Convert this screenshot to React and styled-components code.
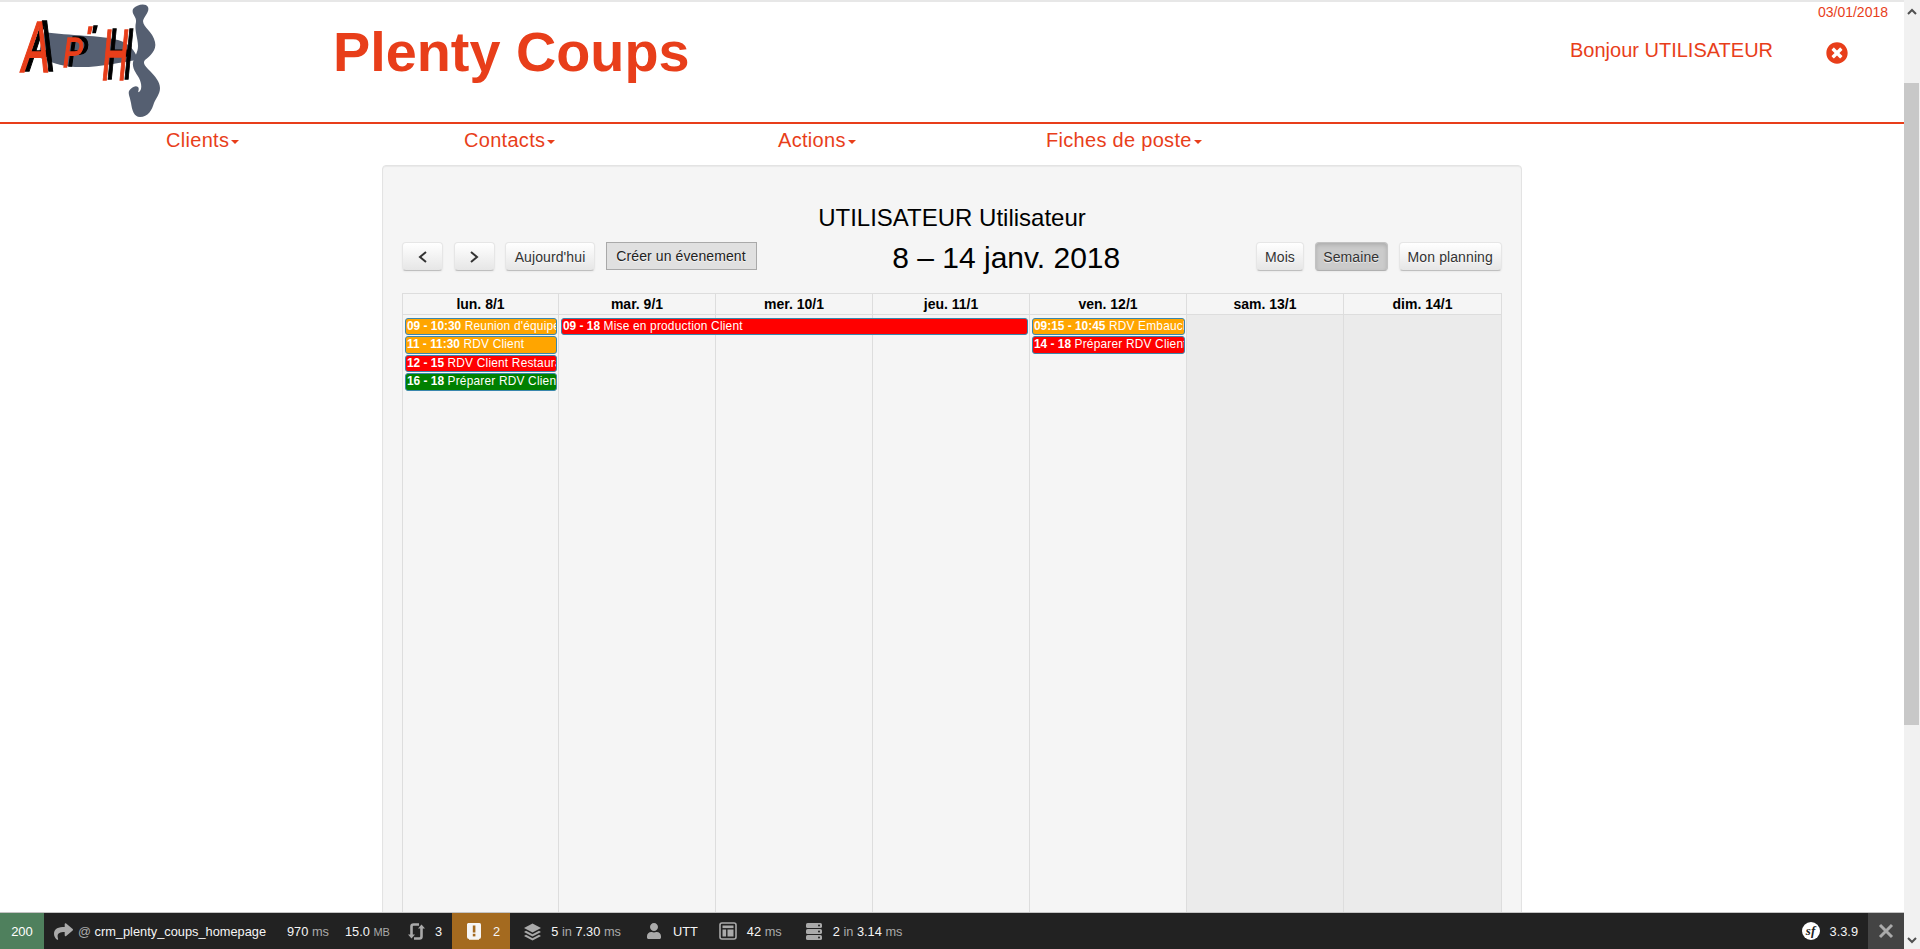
import React from "react";
import styled, { createGlobalStyle, css } from "styled-components";
import { FaTimesCircle, FaShare, FaUser } from "react-icons/fa";

const Global = createGlobalStyle`
  html, body {
    margin: 0;
    height: 100%;
    overflow: hidden;
    background: #fff;
    font-family: "Liberation Sans", Arial, sans-serif;
  }
`;

const RED = "#e83e1a";

const Shell = styled.div`
  display: flex;
  height: 949px;
  overflow: hidden;
`;

const Main = styled.div`
  flex: 1;
  min-width: 0;
  border-top: 2px solid #e7e7e7;
`;

const Scrollbar = styled.div`
  width: 16px;
  background: #f1f1f1;
  display: flex;
  flex-direction: column;
  justify-content: space-between;
`;

const ScrollArrow = styled.div`
  height: ${(p) => p.$h}px;
  display: flex;
  align-items: center;
  justify-content: center;
`;

const ScrollThumb = styled.div`
  width: 15px;
  height: 642px;
  margin-top: 61px;
  background: #c8c8c8;
`;

const Header = styled.header`
  height: 120px;
  display: flex;
  border-bottom: 2px solid ${RED};
`;

const LogoBox = styled.div`
  width: 333px;
  flex: none;
`;

const Title = styled.h1`
  flex: 1;
  margin: 18px 0 0;
  font-size: 55.8px;
  line-height: 64px;
  font-weight: 700;
  color: ${RED};
`;

const UserBox = styled.div`
  width: 318px;
  box-sizing: content-box;
  flex: none;
  padding: 2px 16px 0 0;
  color: ${RED};
  .date {
    font-size: 14px;
    line-height: 16px;
    text-align: right;
  }
  .hello {
    display: flex;
    align-items: flex-start;
    justify-content: space-between;
    margin-top: 18px;
    padding-right: 40px;
    font-size: 20px;
    line-height: 24px;
  }
  svg {
    margin-top: 4px;
    display: block;
  }
`;

const Nav = styled.nav`
  height: 32px;
  padding-left: 166px;
  display: flex;
  align-items: center;
`;

const NavItem = styled.a`
  width: ${(p) => p.$w}px;
  flex: none;
  font-size: 20px;
  line-height: 32px;
  letter-spacing: 0.3px;
  color: ${RED};
  &::after {
    content: "";
    display: inline-block;
    margin-left: 2px;
    vertical-align: middle;
    border-top: 4px solid ${RED};
    border-left: 4px solid transparent;
    border-right: 4px solid transparent;
  }
`;

const Panel = styled.section`
  box-sizing: border-box;
  width: 1140px;
  height: 790px;
  margin: 9px 0 0 382px;
  padding: 19px;
  background: #f5f5f5;
  border: 1px solid #e3e3e3;
  border-radius: 4px;
  box-shadow: inset 0 1px 1px rgba(0, 0, 0, 0.05);
`;

const CalTitle = styled.h3`
  margin: 20px 0 11px;
  font-size: 24px;
  line-height: 26px;
  font-weight: 400;
  text-align: center;
  color: #000;
`;

const Toolbar = styled.div`
  height: 51px;
  display: flex;
  justify-content: space-between;
  align-items: flex-start;
`;

const BtnGroup = styled.div`
  display: flex;
  gap: 10.5px;
`;

const DateTitle = styled.h2`
  margin: 0;
  font-size: 30px;
  line-height: 32px;
  font-weight: 400;
  color: #000;
`;

const Btn = styled.button`
  box-sizing: border-box;
  height: 29px;
  width: ${(p) => p.$w}px;
  padding: 0;
  font: 14px "Liberation Sans", Arial, sans-serif;
  letter-spacing: 0.1px;
  color: #333;
  border: 1px solid;
  border-color: #e6e6e6 #e6e6e6 #bfbfbf;
  border-radius: 4px;
  background: linear-gradient(#fff, #e6e6e6);
  text-shadow: 0 1px 1px rgba(255, 255, 255, 0.75);
  box-shadow: inset 0 1px 0 rgba(255, 255, 255, 0.2), 0 1px 2px rgba(0, 0, 0, 0.05);
  display: flex;
  align-items: center;
  justify-content: center;
  ${(p) =>
    p.$active &&
    css`
      background: #cbcbcb;
      border-color: #c2c2c2 #c2c2c2 #b0b0b0;
      box-shadow: inset 0 2px 4px rgba(0, 0, 0, 0.15), 0 1px 2px rgba(0, 0, 0, 0.05);
    `}
  ${(p) =>
    p.$flat &&
    css`
      background: #e0e0e0;
      border: 1px solid #a9a9a9;
      border-radius: 0;
      box-shadow: none;
      color: #222;
      height: 28px;
    `}
`;

const Grid = styled.div`
  height: 640px;
  display: grid;
  grid-template-columns: 156px repeat(5, 157px) 158px;
  grid-template-rows: 21px 20px 18.5px 18.5px 18.5px 1fr;
  border: solid #ddd;
  border-width: 1px 0 0 1px;
  box-sizing: border-box;
`;

const HeadCell = styled.div`
  grid-row: 1;
  grid-column: ${(p) => p.$col};
  border: solid #ddd;
  border-width: 0 1px 1px 0;
  font-size: 14px;
  line-height: 20px;
  font-weight: 700;
  text-align: center;
  color: #000;
`;

const DayCell = styled.div`
  grid-row: 2 / 7;
  grid-column: ${(p) => p.$col};
  border-right: 1px solid #ddd;
  background: ${(p) => (p.$off ? "#ebebeb" : "transparent")};
`;

const Event = styled.div`
  grid-row: ${(p) => p.$row};
  grid-column: ${(p) => p.$col} / span ${(p) => p.$span || 1};
  align-self: end;
  z-index: 1;
  min-width: 0;
  height: 17.5px;
  box-sizing: border-box;
  margin: 0 2px;
  padding: 0 1px;
  overflow: hidden;
  white-space: nowrap;
  font-size: 11.9px;
  line-height: 15.5px;
  letter-spacing: 0.2px;
  color: #fff;
  background: ${(p) => p.$bg};
  border: 1px solid #3a87ad;
  border-radius: 3px;
  b {
    font-weight: 700;
    letter-spacing: 0;
  }
`;

const Debug = styled.footer`
  position: fixed;
  left: 0;
  bottom: 0;
  width: 1904px;
  height: 37px;
  box-sizing: border-box;
  z-index: 5;
  display: flex;
  align-items: center;
  background: #222;
  border-top: 1px solid #c4c4c4;
  font-size: 12.8px;
  color: #f5f5f5;
`;

const Status = styled.div`
  width: 44px;
  height: 100%;
  flex: none;
  display: flex;
  align-items: center;
  justify-content: center;
  background: #4f805d;
  color: #fff;
  font-size: 13px;
`;

const Tool = styled.div`
  height: 100%;
  flex: none;
  display: flex;
  align-items: center;
  gap: ${(p) => p.$gap ?? 9}px;
  margin-left: ${(p) => p.$ml || 0}px;
  padding: ${(p) => p.$pad || 0};
  background: ${(p) => p.$bg || "transparent"};
  white-space: pre;
  svg {
    display: block;
    flex: none;
  }
`;

const Version = styled(Tool)`
  margin-left: auto;
`;

const Label = styled.span`
  color: #aaa;
  font-size: ${(p) => p.$size || 12.8}px;
`;

const SfBadge = styled.span`
  width: 18px;
  height: 18px;
  border-radius: 50%;
  background: #fff;
  color: #222;
  display: flex;
  align-items: center;
  justify-content: center;
  font: italic 700 13px "Liberation Serif", serif;
`;

const CloseBox = styled.div`
  width: 36px;
  height: 100%;
  margin-left: 10px;
  flex: none;
  background: #444;
  display: flex;
  align-items: center;
  justify-content: center;
`;

const LETTERS = [
  { ch: "A", x: 22, y: 70, size: 72, w: 28 },
  { ch: "P", x: 63, y: 65, size: 42, w: 20 },
  { ch: "'", x: 85, y: 45, size: 30, w: 6 },
  { ch: "H", x: 102, y: 78, size: 72, w: 26 },
];

const LogoLetters = styled.g`
  filter: drop-shadow(5px -1px 0 #000);
  font-family: "Liberation Sans", sans-serif;
  font-style: italic;
  font-weight: 400;
  stroke: #e83e1a;
  stroke-width: 1.5px;
`;

const Logo = () => (
  <svg width="170" height="118" viewBox="0 0 170 118">
    <path
      fill="#555f71"
      d="M44 30C70 34 100 33 118 38C128 41 135 47 138 58C120 60 100 66 75 65C60 64 50 60 38 55Z"
    />
    <path
      fill="#555f71"
      d="M133 7C137 2 146 1 148 5C150 10 144 14 143 19C143 25 153 30 155 40C157 48 150 54 145 58C142 61 146 65 150 69C155 74 160 80 160 86C160 92 156 96 154 101C152 108 148 115 140 115C134 115 132 108 131 101C130 95 128 92 129 89C131 86 135 83 138 85C140 87 137 91 139 90C142 88 142 82 139 76C136 71 132 66 133 60C135 54 138 50 138 44C138 36 134 28 136 20C137 15 131 12 133 7Z"
    />
    <LogoLetters fill="#e83e1a">
      {LETTERS.map((l) => (
        <text key={l.ch} x={l.x} y={l.y} fontSize={l.size} textLength={l.w} lengthAdjust="spacingAndGlyphs">
          {l.ch}
        </text>
      ))}
    </LogoLetters>
  </svg>
);

const Chevron = ({ dir }) => (
  <svg width="10" height="12" viewBox="0 0 10 12">
    <polyline
      points={dir === "left" ? "8,1 2,6 8,11" : "2,1 8,6 2,11"}
      fill="none"
      stroke="#333"
      strokeWidth="2"
    />
  </svg>
);

const SyncIcon = () => (
  <svg width="19" height="19" viewBox="0 0 19 19" fill="none" stroke="#aaa" strokeWidth="2.6">
    <path d="M14.5 5v9.5a2 2 0 0 1-2 2H7" />
    <path d="M4.5 14V4.5a2 2 0 0 1 2-2H12" />
    <path d="M11 6.5L14.5 2.5l3.5 4z" fill="#aaa" stroke="none" />
    <path d="M1 12.5l3.5 4 3.5-4z" fill="#aaa" stroke="none" />
  </svg>
);

const AlertIcon = () => (
  <svg width="16" height="19" viewBox="0 0 16 19">
    <path d="M2 1h11.5a1.5 1.5 0 0 1 1.5 1.5V15a2 2 0 0 1-2 2H3a2 2 0 0 1-2-2V2z" fill="#f5f5f5" />
    <path d="M3 17.5h10" stroke="#e8d8bf" strokeWidth="1" />
    <rect x="6.8" y="3.5" width="2.6" height="7" fill="#a46a1f" />
    <rect x="6.8" y="11.8" width="2.6" height="2.6" fill="#a46a1f" />
  </svg>
);

const LayersIcon = () => (
  <svg width="19" height="19" viewBox="0 0 19 19" fill="#aaa">
    <path d="M9.5 1.5L18 6l-8.5 4.5L1 6z" />
    <path d="M3 8.8l6.5 3.4L16 8.8 18 10l-8.5 4.5L1 10z" />
    <path d="M3 12.8l6.5 3.4 6.5-3.4 2 1.2-8.5 4.5L1 14z" />
  </svg>
);

const TemplateIcon = () => (
  <svg width="18" height="18" viewBox="0 0 18 18">
    <rect x="1" y="1" width="16" height="16" rx="2" fill="none" stroke="#aaa" strokeWidth="1.6" />
    <rect x="3.5" y="3.5" width="11" height="2.6" fill="#aaa" />
    <rect x="3.5" y="7.5" width="3.6" height="7" fill="#aaa" />
    <rect x="8.5" y="7.5" width="6" height="7" fill="#aaa" />
  </svg>
);

const ServerIcon = () => (
  <svg width="18" height="19" viewBox="0 0 18 19" fill="#aaa">
    <rect x="1" y="1" width="16" height="5" rx="1.6" />
    <rect x="1" y="7" width="16" height="5" rx="1.6" />
    <rect x="1" y="13" width="16" height="5" rx="1.6" />
    <circle cx="14" cy="3.5" r="1" fill="#222" />
    <circle cx="14" cy="9.5" r="1" fill="#222" />
    <circle cx="14" cy="15.5" r="1" fill="#222" />
  </svg>
);

const DAYS = ["lun. 8/1", "mar. 9/1", "mer. 10/1", "jeu. 11/1", "ven. 12/1", "sam. 13/1", "dim. 14/1"];

const EVENTS = [
  { col: 1, row: 2, bg: "orange", time: "09 - 10:30", label: "Reunion d'équipe" },
  { col: 1, row: 3, bg: "orange", time: "11 - 11:30", label: "RDV Client" },
  { col: 1, row: 4, bg: "red", time: "12 - 15", label: "RDV Client Restaurant" },
  { col: 1, row: 5, bg: "green", time: "16 - 18", label: "Préparer RDV Client" },
  { col: 2, row: 2, span: 3, bg: "red", time: "09 - 18", label: "Mise en production Client" },
  { col: 5, row: 2, bg: "orange", time: "09:15 - 10:45", label: "RDV Embauche" },
  { col: 5, row: 3, bg: "red", time: "14 - 18", label: "Préparer RDV Client" },
];

export default function App() {
  return (
    <>
      <Global />
      <Shell>
        <Main>
          <Header>
            <LogoBox>
              <Logo />
            </LogoBox>
            <Title>Plenty Coups</Title>
            <UserBox>
              <div className="date">03/01/2018</div>
              <div className="hello">
                <span>Bonjour UTILISATEUR</span>
                <FaTimesCircle size={22} color={RED} />
              </div>
            </UserBox>
          </Header>
          <Nav>
            <NavItem $w={298}>Clients</NavItem>
            <NavItem $w={314}>Contacts</NavItem>
            <NavItem $w={268}>Actions</NavItem>
            <NavItem $w={200}>Fiches de poste</NavItem>
          </Nav>
          <Panel>
            <CalTitle>UTILISATEUR Utilisateur</CalTitle>
            <Toolbar>
              <BtnGroup>
                <Btn $w={41}><Chevron dir="left" /></Btn>
                <Btn $w={41}><Chevron dir="right" /></Btn>
                <Btn $w={90}>Aujourd'hui</Btn>
                <Btn $w={151} $flat>Créer un évenement</Btn>
              </BtnGroup>
              <DateTitle>8 – 14 janv. 2018</DateTitle>
              <BtnGroup>
                <Btn $w={48}>Mois</Btn>
                <Btn $w={73.5} $active>Semaine</Btn>
                <Btn $w={103.5}>Mon planning</Btn>
              </BtnGroup>
            </Toolbar>
            <Grid>
              {DAYS.map((d, i) => (
                <HeadCell key={d} $col={i + 1}>{d}</HeadCell>
              ))}
              {DAYS.map((d, i) => (
                <DayCell key={d} $col={i + 1} $off={i > 4} />
              ))}
              {EVENTS.map((e) => (
                <Event key={e.time + e.col} $col={e.col} $row={e.row} $span={e.span} $bg={e.bg}>
                  <b>{e.time}</b> {e.label}
                </Event>
              ))}
            </Grid>
          </Panel>
        </Main>
        <Scrollbar>
          <div>
            <ScrollArrow $h={22}>
              <svg width="10" height="7" viewBox="0 0 10 7">
                <polyline points="1,6 5,2 9,6" fill="none" stroke="#505050" strokeWidth="2" />
              </svg>
            </ScrollArrow>
            <ScrollThumb />
          </div>
          <ScrollArrow $h={17}>
            <svg width="10" height="7" viewBox="0 0 10 7">
              <polyline points="1,1 5,5 9,1" fill="none" stroke="#505050" strokeWidth="2" />
            </svg>
          </ScrollArrow>
        </Scrollbar>
      </Shell>
      <Debug>
        <Status>200</Status>
        <Tool $ml={10} $gap={5}>
          <FaShare size={19} color="#aaa" />
          <span><Label>@ </Label>crm_plenty_coups_homepage</span>
        </Tool>
        <Tool $ml={21}>
          <span>970 <Label>ms</Label></span>
        </Tool>
        <Tool $ml={16}>
          <span>15.0 <Label $size={11}>MB</Label></span>
        </Tool>
        <Tool $ml={17}>
          <SyncIcon />
          <span>3</span>
        </Tool>
        <Tool $ml={10} $bg="#a46a1f" $pad="0 10px 0 14px" $gap={11}>
          <AlertIcon />
          <span>2</span>
        </Tool>
        <Tool $ml={13} $gap={9}>
          <LayersIcon />
          <span>5 <Label>in</Label> 7.30 <Label>ms</Label></span>
        </Tool>
        <Tool $ml={25} $gap={11}>
          <FaUser size={16} color="#aaa" />
          <span>UTT</span>
        </Tool>
        <Tool $ml={21} $gap={10}>
          <TemplateIcon />
          <span>42 <Label>ms</Label></span>
        </Tool>
        <Tool $ml={23} $gap={10}>
          <ServerIcon />
          <span>2 <Label>in</Label> 3.14 <Label>ms</Label></span>
        </Tool>
        <Version $gap={10}>
          <SfBadge>sf</SfBadge>
          <span>3.3.9</span>
        </Version>
        <CloseBox>
          <svg width="16" height="16" viewBox="0 0 16 16">
            <path d="M2 2l12 12M14 2L2 14" stroke="#aaa" strokeWidth="3" />
          </svg>
        </CloseBox>
      </Debug>
    </>
  );
}
